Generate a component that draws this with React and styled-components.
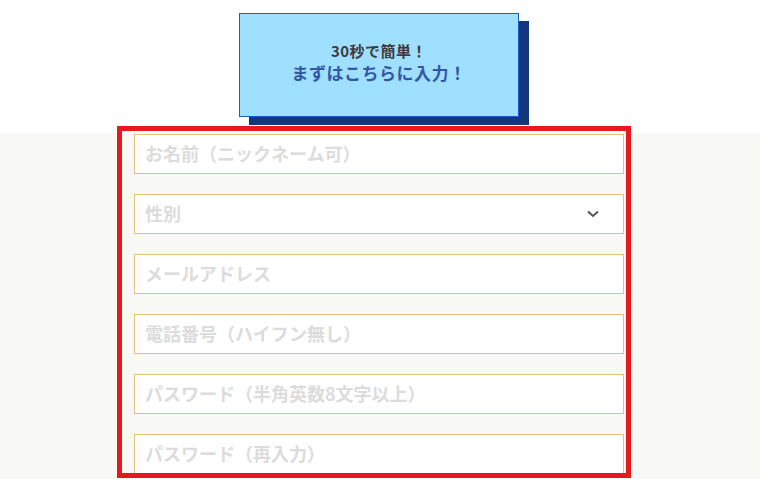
import React from 'react';
import styled, { createGlobalStyle } from 'styled-components';

const GlobalStyle = createGlobalStyle`
  html, body {
    margin: 0;
    padding: 0;
    background: #ffffff;
    font-family: "Noto Sans CJK JP", "Noto Sans", sans-serif;
  }
  * { box-sizing: border-box; }
`;

const Page = styled.div`
  width: 760px;
  height: 479px;
  overflow: hidden;
  display: flex;
  flex-direction: column;
`;

const Header = styled.div`
  height: 133px;
  display: flex;
  justify-content: center;
  padding: 13px 0 0 0;
  background: #ffffff;
`;

const CtaBox = styled.div`
  width: 280px;
  height: 104px;
  margin-left: -2px;
  background: #9fdfff;
  border: 1px solid #1d5bd4;
  box-shadow: 10px 8px 0 #12377f;
  display: flex;
  flex-direction: column;
  align-items: center;
  justify-content: center;
  padding-bottom: 6px;
  font-weight: 700;
  line-height: 22px;
`;

const CtaLine = styled.div`
  font-size: ${p => p.$size}px;
  color: ${p => p.$color};
  letter-spacing: 0.5px;
`;

const FormSection = styled.div`
  flex: 1;
  background: #f8f8f4;
  display: flex;
  justify-content: center;
  padding-top: 1px;
  position: relative;
`;

const Highlight = styled.div`
  position: absolute;
  left: 117px;
  top: -7px;
  width: 514px;
  height: 352px;
  border: 5px solid #e8191c;
  pointer-events: none;
`;

const Form = styled.div`
  width: 490px;
  margin-left: -2px;
  display: flex;
  flex-direction: column;
  gap: 20px;
`;

const Field = styled.input`
  width: 100%;
  height: 40px;
  border: 1px solid #dfc37a;
  background: #ffffff;
  padding: 0 10px 3px 10px;
  font-family: "Noto Sans CJK JP", sans-serif;
  font-size: 18px;
  font-weight: 700;
  color: #333;
  outline: none;
  &::placeholder {
    color: #dcdcdc;
  }
`;

const SelectWrap = styled.div`
  position: relative;
  height: 40px;
`;

const Select = styled.select`
  appearance: none;
  width: 100%;
  height: 40px;
  border: 1px solid #dfc37a;
  background: #ffffff;
  padding: 0 10px 3px 10px;
  font-family: "Noto Sans CJK JP", sans-serif;
  font-size: 18px;
  font-weight: 700;
  color: #dcdcdc;
  outline: none;
`;

const Chevron = styled.svg`
  position: absolute;
  right: 25px;
  top: 16px;
  pointer-events: none;
`;

export default function App() {
  return (
    <Page>
      <GlobalStyle />
      <Header>
        <CtaBox>
          <CtaLine $size={15} $color="#3b3b3b">30秒で簡単！</CtaLine>
          <CtaLine $size={17} $color="#3256a8">まずはこちらに入力！</CtaLine>
        </CtaBox>
      </Header>
      <FormSection>
        <Form>
          <Field placeholder="お名前（ニックネーム可）" />
          <SelectWrap>
            <Select defaultValue="">
              <option value="" disabled>性別</option>
              <option value="m">男性</option>
              <option value="f">女性</option>
            </Select>
            <Chevron width="12" height="8" viewBox="0 0 12 8">
              <path d="M1 1.5 L6 6 L11 1.5" fill="none" stroke="#555" strokeWidth="2" />
            </Chevron>
          </SelectWrap>
          <Field placeholder="メールアドレス" />
          <Field placeholder="電話番号（ハイフン無し）" />
          <Field type="password" placeholder="パスワード（半角英数8文字以上）" />
          <Field type="password" placeholder="パスワード（再入力）" />
        </Form>
        <Highlight />
      </FormSection>
    </Page>
  );
}
